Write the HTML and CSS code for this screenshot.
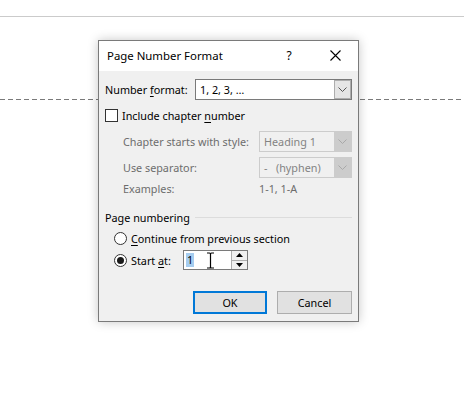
FILE: index.html
```html
<!DOCTYPE html>
<html>
<head>
<meta charset="utf-8">
<link rel="stylesheet" href="styles.css">
</head>
<body>
<div class="page">
  <div class="topline"></div>
  <div class="dashed"></div>

  <div class="dialog">
    <div class="titlebar">
      <span class="title">Page Number Format</span>
      <span class="help">?</span>
      <span class="close">
        <svg width="11" height="11" viewBox="0 0 11 11"><path d="M0.5 0.5 L10.5 10.5 M10.5 0.5 L0.5 10.5" stroke="#000" stroke-width="1.1" fill="none"/></svg>
      </span>
    </div>

    <div class="body">
      <div class="row r-format">
        <span class="lbl lbl-format">Number <u>f</u>ormat:</span>
        <div class="combo combo-wide">
          <span class="val">1, 2, 3, …</span>
          <span class="arrow">
            <svg width="9" height="5" viewBox="0 0 9 5"><path d="M0.5 0.5 L4.5 4.5 L8.5 0.5" stroke="#555" stroke-width="1" fill="none"/></svg>
          </span>
        </div>
      </div>

      <div class="row r-check">
        <span class="checkbox"></span>
        <span>Include chapter <u>n</u>umber</span>
      </div>

      <div class="row r-chapter indent">
        <span class="lbl lbl-ind dim">Chapter starts with style:</span>
        <div class="combo combo-narrow disabled">
          <span class="val">Heading 1</span>
          <span class="arrow">
            <svg width="9" height="5" viewBox="0 0 9 5"><path d="M0.5 0.5 L4.5 4.5 L8.5 0.5" stroke="#a8a8a8" stroke-width="1" fill="none"/></svg>
          </span>
        </div>
      </div>

      <div class="row r-sep indent">
        <span class="lbl lbl-ind dim">Use separator:</span>
        <div class="combo combo-narrow disabled">
          <span class="val">-&nbsp;&nbsp;&nbsp;(hyphen)</span>
          <span class="arrow">
            <svg width="9" height="5" viewBox="0 0 9 5"><path d="M0.5 0.5 L4.5 4.5 L8.5 0.5" stroke="#a8a8a8" stroke-width="1" fill="none"/></svg>
          </span>
        </div>
      </div>

      <div class="row r-ex indent">
        <span class="lbl lbl-ind dim">Examples:</span>
        <span class="dim">1-1, 1-A</span>
      </div>

      <div class="group">
        <span class="group-title">Page numbering</span>
        <span class="rule"></span>
      </div>

      <div class="row r-radio r-radio1">
        <span class="radio"></span>
        <span><u>C</u>ontinue from previous section</span>
      </div>

      <div class="row r-radio r-radio2">
        <span class="radio checked"></span>
        <span class="lbl-start">Start <u>a</u>t:</span>
        <div class="spin">
          <div class="spin-field">
            <span class="sel">1</span>
            <svg class="ibeam" width="9" height="17" viewBox="0 0 9 17"><path d="M1 1 H3.5 Q4.5 1 4.5 2 V15 Q4.5 16 3.5 16 H1 M8 1 H5.5 Q4.5 1 4.5 2 M8 16 H5.5 Q4.5 16 4.5 15" stroke="#000" stroke-width="1.2" fill="none"/></svg>
          </div>
          <div class="spin-btns">
            <span class="spin-btn"><svg width="7" height="4" viewBox="0 0 7 4"><path d="M0 4 L3.5 0 L7 4 Z" fill="#000"/></svg></span>
            <span class="spin-btn"><svg width="7" height="4" viewBox="0 0 7 4"><path d="M0 0 L3.5 4 L7 0 Z" fill="#000"/></svg></span>
          </div>
        </div>
      </div>

      <div class="buttons">
        <button class="btn btn-default">OK</button>
        <button class="btn">Cancel</button>
      </div>
    </div>
  </div>
</div>
</body>
</html>
```

FILE: styles.css
```css
* { box-sizing: border-box; }

html, body {
  margin: 0;
  padding: 0;
  background: #ffffff;
}

body {
  font-family: "Noto Sans", "Liberation Sans", sans-serif;
  font-size: 10.8px;
  color: #000;
}

.page {
  position: relative;
  width: 464px;
  height: 406px;
  overflow: hidden;
}

.topline {
  margin-top: 16px;
  height: 1px;
  background: #cbcbcb;
}

.dashed {
  margin-top: 82px;
  height: 1px;
  background: repeating-linear-gradient(90deg, #7a7a7a 0 5px, transparent 5px 8px);
}

u { text-decoration: underline; text-underline-offset: 2px; }

/* dialog window overlays page content */
.dialog {
  position: absolute;
  left: 98px;
  top: 40px;
  width: 261px;
  height: 282px;
  border: 1px solid #7a7a7a;
  background: #f0f0f0;
  box-shadow: 0 0 10px rgba(0, 0, 0, 0.22);
  display: flex;
  flex-direction: column;
}

.titlebar {
  height: 30px;
  background: #ffffff;
  display: flex;
  align-items: center;
  padding-left: 8px;
  padding-bottom: 1px;
}

.title {
  font-size: 11.4px;
  flex: 1;
}

.help {
  font-size: 12px;
  width: 16px;
  margin-right: 33px;
  text-align: center;
}

.close {
  width: 11px;
  height: 11px;
  margin-right: 17px;
  display: flex;
}

.body {
  padding: 0 6px;
  display: flex;
  flex-direction: column;
}

.row {
  display: flex;
  align-items: center;
  white-space: nowrap;
}

.indent { padding-left: 18px; }

.lbl-format { width: 90px; flex-shrink: 0; }
.lbl-ind { width: 136px; flex-shrink: 0; }

.dim { color: #6d6d6d; }

.r-format { margin-top: 8px; height: 21px; }
.r-check { margin-top: 7px; height: 17px; }
.r-chapter { margin-top: 7px; height: 21px; }
.r-sep { margin-top: 5px; height: 21px; }
.r-ex { margin-top: 2px; height: 17px; }

.combo {
  height: 21px;
  border: 1px solid #7a7a7a;
  background: #fff;
  display: flex;
  align-items: stretch;
}

.combo-wide { width: 157px; }
.combo-narrow { width: 93px; }

.combo .val {
  flex: 1;
  padding-left: 4px;
  display: flex;
  align-items: center;
}

.combo .arrow {
  width: 17px;
  background: #e5e5e5;
  border: 1px solid #adadad;
  display: flex;
  align-items: center;
  justify-content: center;
}

.combo.disabled {
  border-color: #cccccc;
  background: #f0f0f0;
  color: #838383;
}

.combo.disabled .arrow {
  background: #cccccc;
  border-color: #cccccc;
}

.checkbox {
  width: 13px;
  height: 13px;
  border: 1px solid #333;
  background: #fff;
  margin-right: 4px;
}

.group {
  margin-top: 12px;
  height: 16px;
  display: flex;
  align-items: center;
  white-space: nowrap;
}

.group-title { width: 90px; flex-shrink: 0; }

.rule {
  flex: 1;
  height: 1px;
  background: #dcdcdc;
}

.r-radio { padding-left: 9px; }
.r-radio1 { margin-top: 5px; height: 17px; }
.r-radio2 { margin-top: 3px; height: 20px; }

.radio {
  width: 13px;
  height: 13px;
  border: 1px solid #333;
  border-radius: 50%;
  background: #fff;
  margin-right: 4px;
  display: flex;
  align-items: center;
  justify-content: center;
}

.radio.checked::after {
  content: "";
  width: 7px;
  height: 7px;
  border-radius: 50%;
  background: #1a1a1a;
}

.lbl-start { width: 52px; }

.spin {
  width: 65px;
  height: 20px;
  border: 1px solid #7a7a7a;
  background: #fff;
  display: flex;
}

.spin-field {
  position: relative;
  flex: 1;
  display: flex;
  align-items: center;
  padding-left: 2px;
}

.sel {
  background: #a6cdf0;
  padding: 0 1px;
  line-height: 14px;
}

.ibeam {
  position: absolute;
  left: 22px;
  top: 1px;
}

.spin-btns {
  width: 16px;
  display: flex;
  flex-direction: column;
  border-left: 1px solid #adadad;
}

.spin-btn {
  flex: 1;
  background: #f0f0f0;
  display: flex;
  align-items: center;
  justify-content: center;
}

.spin-btn + .spin-btn { border-top: 1px solid #adadad; }

.buttons {
  margin-top: 21px;
  display: flex;
  justify-content: flex-end;
  gap: 10px;
}

.btn {
  font-family: inherit;
  font-size: 10.8px;
  width: 75px;
  height: 23px;
  border: 1px solid #adadad;
  background: #e1e1e1;
  color: #000;
  padding: 0;
}

.btn-default {
  width: 74px;
  border: 2px solid #0078d7;
}
```
